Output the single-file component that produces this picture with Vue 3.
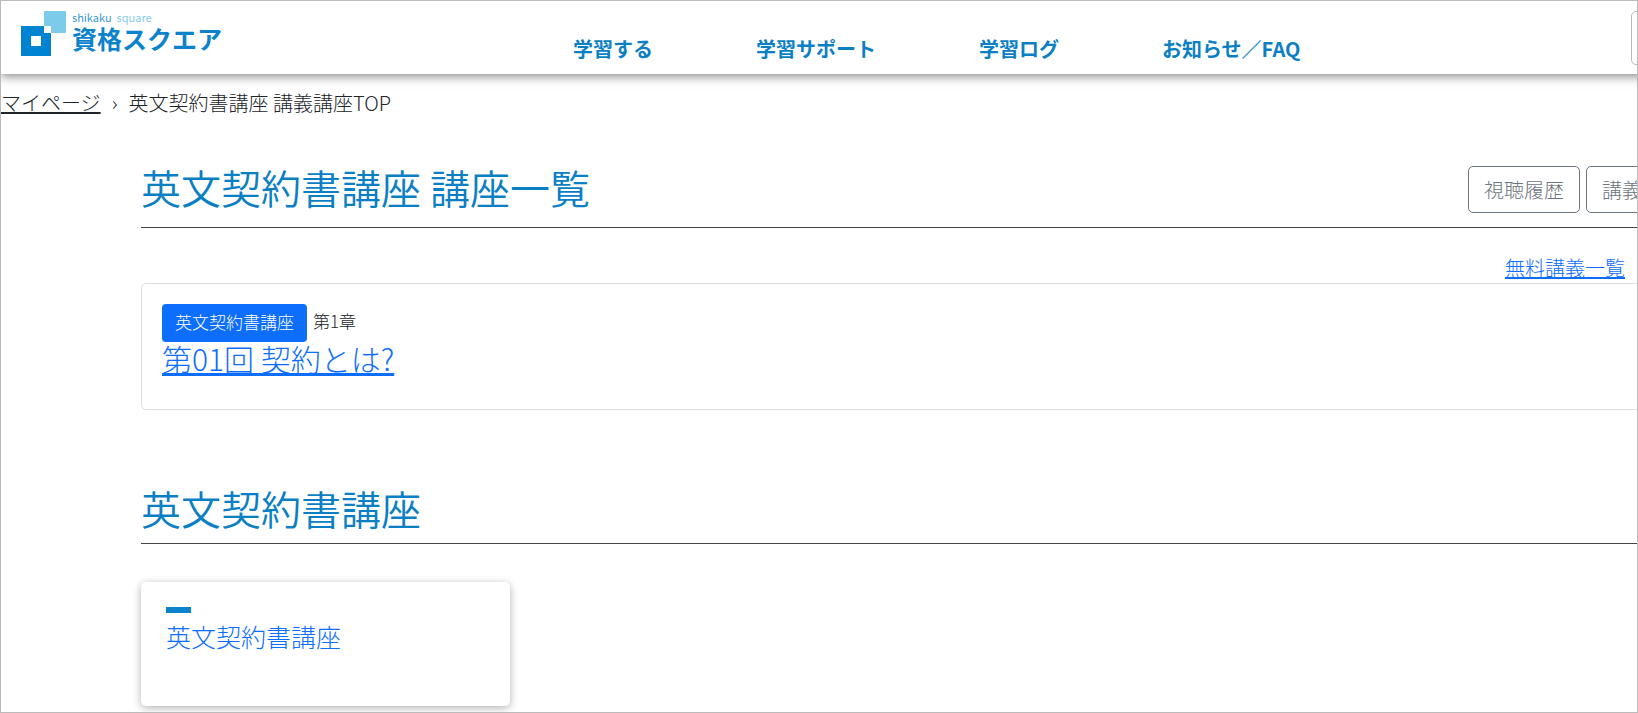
<script setup>
const navItems = ['学習する', '学習サポート', '学習ログ', 'お知らせ／FAQ']
</script>

<template>
  <div class="page">
    <div class="canvas">
      <header class="header">
        <a href="#" class="logo" aria-label="資格スクエア">
          <svg class="mark" width="45" height="45" viewBox="0 0 45 45" aria-hidden="true">
            <rect x="23" y="0" width="22" height="22" fill="#7ccbea" />
            <path d="M0 15h23v7h7v23H0zM10 25v10h10V25z" fill="#0083d1" fill-rule="evenodd" />
            <rect x="23" y="15" width="7" height="7" fill="#fff" />
          </svg>
          <span class="logo-text">
            <span class="roman"><span class="roman-dark">shikaku</span><span>square</span></span>
            <span class="brand">資格スクエア</span>
          </span>
        </a>
        <nav class="nav">
          <a v-for="item in navItems" :key="item" href="#">{{ item }}</a>
        </nav>
        <button class="toggle" type="button" aria-label="メニュー"></button>
      </header>

      <nav class="crumbs">
        <a href="#">マイページ</a>
        <span class="sep">›</span>
        <span>英文契約書講座 講義講座TOP</span>
      </nav>

      <main class="main">
        <div class="title-row">
          <h1>英文契約書講座 講座一覧</h1>
          <div class="actions">
            <button type="button">視聴履歴</button>
            <button type="button">講義</button>
          </div>
        </div>
        <div class="free"><a href="#">無料講義一覧</a></div>
        <section class="lesson">
          <div class="meta">
            <span class="badge">英文契約書講座</span>
            <span class="chapter">第1章</span>
          </div>
          <a class="lesson-link" href="#">第01回 契約とは?</a>
        </section>

        <h2>英文契約書講座</h2>
        <a class="course" href="#">
          <span class="bar"></span>
          <span>英文契約書講座</span>
        </a>
      </main>
    </div>
  </div>
</template>

<style>
body {
  margin: 0;
}
</style>

<style scoped>
.page {
  box-sizing: border-box;
  height: 100vh;
  overflow: hidden;
  border: 1px solid #bbb;
  background: #fff;
  color: #212529;
  font-family: "Noto Sans CJK JP", sans-serif;
  font-size: 20px;
  font-weight: 300;
  line-height: 30px;
}
.canvas {
  width: calc(100% + 61px);
}
.header {
  display: flex;
  align-items: center;
  box-sizing: border-box;
  height: 73px;
  padding: 0 7px 0 20px;
  box-shadow: 0 2px 10px rgba(0, 0, 0, 0.5);
}
.logo {
  display: flex;
  align-items: flex-start;
  gap: 6px;
  width: 203px;
  height: 53px;
  color: #0b82cc;
  text-decoration: none;
}
.mark {
  flex: none;
}
.logo-text {
  display: flex;
  flex-direction: column;
}
.roman {
  display: flex;
  gap: 5px;
  font-size: 11px;
  font-weight: 400;
  line-height: 12px;
  color: #86cce8;
}
.roman-dark {
  color: #3b9ad4;
}
.brand {
  font-size: 25px;
  font-weight: 700;
  line-height: 30px;
  white-space: nowrap;
}
.nav {
  display: flex;
  gap: 103px;
  margin-left: 349px;
  padding-top: 22px;
}
.nav a {
  color: #0b7fc4;
  font-weight: 700;
  text-decoration: none;
  white-space: nowrap;
}
.toggle {
  width: 60px;
  height: 54px;
  margin-left: auto;
  border: 1px solid #bbb;
  border-radius: 5px;
  background: #fff;
}
.crumbs {
  display: flex;
  padding-top: 14px;
}
.crumbs a {
  color: #212529;
}
.sep {
  width: 28px;
  text-align: center;
}
.main {
  padding: 0 0 0 140px;
}
.title-row {
  display: flex;
  justify-content: space-between;
  align-items: flex-start;
  margin-top: 48px;
  height: 61px;
  border-bottom: 1px solid #444;
}
h1,
h2 {
  margin: 0;
  color: #0b7fc4;
  font-size: 40px;
  font-weight: 350;
  line-height: 42px;
}
.actions {
  display: flex;
  gap: 6px;
}
.actions button {
  box-sizing: border-box;
  width: 112px;
  height: 47px;
  padding: 0 15px;
  border: 1px solid #6c757d;
  border-radius: 5px;
  background: #fff;
  color: #6c757d;
  font: inherit;
  text-align: left;
  white-space: nowrap;
}
.free {
  margin-top: 25px;
  padding-right: 73px;
  text-align: right;
}
.free a,
.lesson-link {
  color: #0d6efd;
}
.lesson {
  box-sizing: border-box;
  height: 127px;
  padding: 20px;
  border: 1px solid #dfdfdf;
  border-radius: 5px;
}
.meta {
  display: flex;
  gap: 6px;
  font-size: 17px;
}
.badge {
  height: 38px;
  padding: 0 13px;
  border-radius: 4px;
  background: #0d6efd;
  color: #fff;
  line-height: 36px;
}
.chapter {
  line-height: 34px;
}
.lesson-link {
  display: block;
  width: max-content;
  font-size: 30px;
  line-height: 32px;
}
h2 {
  margin-top: 77px;
  padding-bottom: 14px;
  border-bottom: 1px solid #444;
}
.course {
  display: flex;
  flex-direction: column;
  box-sizing: border-box;
  width: 369px;
  height: 124px;
  margin-top: 38px;
  padding: 25px;
  border-radius: 5px;
  box-shadow: 0 2px 8px rgba(0, 0, 0, 0.3);
  color: #0d6efd;
  font-size: 25px;
  line-height: 46px;
  text-decoration: none;
}
.bar {
  width: 25px;
  height: 6px;
  flex: none;
  background: #0b82cc;
}
</style>
